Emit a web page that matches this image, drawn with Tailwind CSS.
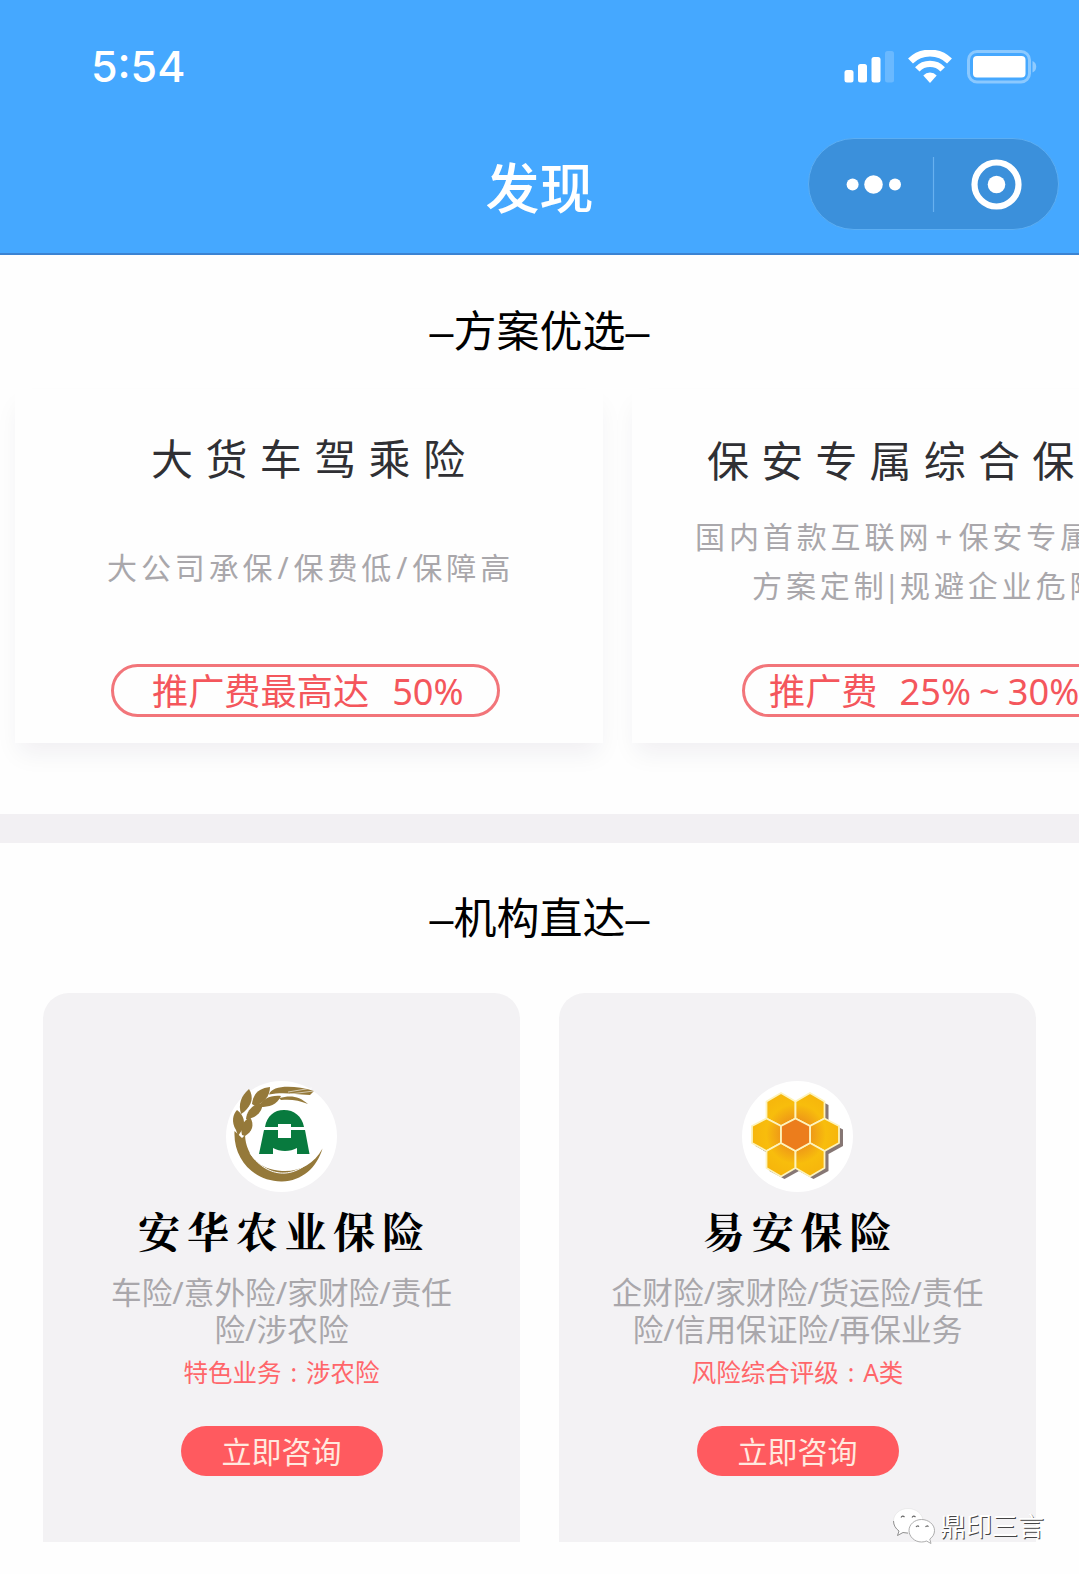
<!DOCTYPE html>
<html lang="zh-CN">
<head>
    <meta charset="UTF-8">
    <meta name="viewport" content="width=device-width, initial-scale=1.0">
    <title>发现</title>
    <script src="https://cdn.jsdelivr.net/npm/@tailwindcss/browser@4"></script>
</head>
<body class="bg-[#fefefe] font-['Noto_Sans','Noto_Sans_CJK_SC',sans-serif] overflow-hidden">
<div class="relative w-[1079px] h-[1574px] overflow-hidden">
    <header class="h-[255px] bg-[#45a8ff] border-b-2 border-[#3b83d2] text-white">
        <!-- status bar -->
        <div class="h-[133px] flex items-center justify-between pl-[91px] pr-[42px]">
            <div class="font-['Inter',sans-serif] font-medium text-[43px] leading-none">5:54</div>
            <div class="flex items-center">
                <svg class="w-[50px] h-[34px]" viewBox="0 0 50 34" fill="#fff">
                    <rect x="0.5" y="20" width="9" height="12.5" rx="2.5"/>
                    <rect x="14" y="14" width="9" height="18.5" rx="2.5"/>
                    <rect x="27.5" y="7" width="9" height="25.5" rx="2.5"/>
                    <rect x="41" y="1" width="9" height="31.5" rx="2.5" opacity=".2"/>
                </svg>
                <svg class="w-[44px] h-[34px] ml-[14px]" viewBox="0 0 44 34" fill="none" stroke="#fff" stroke-width="7">
                    <path d="M2.5 11a28 28 0 0 1 39 0"/>
                    <path d="M9.3 19.3a17.500 17.500 0 0 1 25.400 0" stroke-width="6.2"/>
                    <path d="M15.3 25.500a9 9 0 0 1 13.400 0L22 33z" fill="#fff" stroke="none"/>
                </svg>
                <svg class="w-[70px] h-[34px] ml-[15px]" viewBox="0 0 70 34" fill="#fff">
                    <rect x="1.5" y="1.5" width="61" height="30.5" rx="8.5" fill="none" stroke="#fff" stroke-opacity=".38" stroke-width="3"/>
                    <rect x="6" y="6" width="52.5" height="21.5" rx="4"/>
                    <path d="M65.5 11c5 2 5 9.500 0 11.500z" opacity=".4"/>
                </svg>
            </div>
        </div>
        <!-- nav bar -->
        <div class="relative h-[109px] flex items-center justify-center">
            <h1 class="text-[54px] font-medium leading-none">发现</h1>
            <div class="absolute left-[808px] top-[5px] w-[251px] h-[92px] rounded-full bg-[#3b90db] border border-[#5caef3] flex items-center">
                <svg class="w-[249px] h-[90px]" viewBox="0 0 249 90" fill="#fff">
                    <circle cx="43.6" cy="45.5" r="6"/>
                    <circle cx="64.5" cy="45.5" r="9.3"/>
                    <circle cx="86" cy="45.5" r="6"/>
                    <path d="M124.5 18v55" stroke="#68b1ef" stroke-width="1.2"/>
                    <circle cx="187.5" cy="45.5" r="22" fill="none" stroke="#fff" stroke-width="6.2"/>
                    <circle cx="187.5" cy="45.5" r="8.8"/>
                </svg>
            </div>
        </div>
    </header>

    <section class="h-[559px] pt-[53px]">
        <h2 class="h-[44px] flex justify-center text-[43px] leading-[46px] text-black"><span class="font-['Liberation_Sans']">–</span>方案优选<span class="font-['Liberation_Sans']">–</span></h2>
        <div class="mt-[37px] ml-[15px] flex gap-[29px]">
            <div class="w-[588px] h-[354px] shrink-0 bg-[#fefefe] shadow-[0_14px_24px_-4px_#20104010] flex flex-col pl-[93px]">
                <h3 class="mt-[48px] pl-[43px] text-[42px] leading-[44px] tracking-[12.4px] text-[#303034] whitespace-nowrap">大货车驾乘险</h3>
                <p class="mt-[62px] -ml-px h-[49px] text-[30px] leading-[49px] tracking-[3.9px] text-[#a9a7ab] whitespace-nowrap">大公司承保<span class="mx-px">/</span>保费低<span class="mx-px">/</span>保障高</p>
                <div class="mt-[72px] ml-[3px] w-[389px] h-[53px] rounded-full border-[3px] border-[#f2757a] pl-[38px] text-[36.2px] leading-[48px] text-[#f4565c] whitespace-nowrap">推广费最高达<span class="ml-[23px]">50%</span></div>
            </div>
            <div class="w-[588px] h-[354px] shrink-0 bg-[#fefefe] shadow-[0_14px_24px_-4px_#20104010] flex flex-col">
                <h3 class="mt-[50px] pl-[75px] text-[42px] leading-[44px] tracking-[12.2px] text-[#303034] whitespace-nowrap">保安专属综合保障</h3>
                <p class="mt-[29px] pl-[63px] text-[30px] leading-[49px] tracking-[3.9px] text-[#a9a7ab] whitespace-nowrap">国内首款互联网<span class="ml-[3px] mr-[2px]">+</span>保安专属</p>
                <p class="pl-[120px] text-[30px] leading-[49px] tracking-[3.9px] text-[#a9a7ab] whitespace-nowrap">方案定制<span class="-ml-[4px] -mr-[4px]">|</span>规避企业危险</p>
                <div class="mt-[54px] ml-[110px] w-[389px] h-[53px] rounded-full border-[3px] border-[#f2757a] pl-[24px] text-[36.2px] leading-[48px] text-[#f4565c] whitespace-nowrap">推广费<span class="ml-[22px]">25%</span><span class="mx-[8px]">~</span>30%</div>
            </div>
        </div>
    </section>

    <div class="h-[29px] bg-[#f2f0f3]"></div>

    <section class="pt-[53px]">
        <h2 class="h-[44px] flex justify-center text-[43px] leading-[44px] text-black"><span class="font-['Liberation_Sans']">–</span>机构直达<span class="font-['Liberation_Sans']">–</span></h2>
        <div class="mt-[53px] px-[43px] flex justify-between">
            <div class="w-[477px] h-[549px] rounded-t-[26px] bg-[#f3f2f4] flex flex-col items-center pt-[88px]">
                <svg class="w-[111px] h-[111px]" viewBox="0 0 111 111">
                    <circle cx="55.5" cy="55.5" r="55.5" fill="#fff"/>
                    <!-- wheat ring -->
                    <g fill="#95793a">
                        <path d="M8.5 50C7 80 30 101 56 100.500c20-.5 35-14 40.500-33C88 83 74 91 56 90 34 89 20 75 19 54l-3 3z"/>
                        <path d="M10 49C5 41 7 33 11 29c7 5 9 13 5 20l-4 6z"/>
                        <path d="M15 33c-3-10 0-18 8-25 5 8 3 16-5 23z"/>
                        <path d="M26 23C27 13 33 7 44 6c0 9-6 16-15 19z"/>
                        <path d="M16 54c-2-8 1-14 8-18 5 8 2 15-5 19z"/>
                        <path d="M20 38c1-9 7-15 17-16-1 10-8 15-15 16z"/>
                        <path d="M33 25c4-7 11-11 22-10-4 9-12 11-21 11z"/>
                        <path d="M43 13.500C46 4 68 4 88 10l-4 4c-6 0-10-1-15-1-9-1-18-1-26 .5z"/>
                        <path d="M53 17c12-3 20-2 29 6-9-4-18-5-27-4z"/>
                    </g>
                    <path d="M24 72c14 22 44 32 69-2" fill="none" stroke="#fff" stroke-width="1"/>
                    <path d="M62 11l24-4M64 13l24-3" fill="none" stroke="#fff" stroke-width=".6"/>
                    <!-- green mark -->
                    <path d="M39 46C41 35 48 29 58 29s18 6 20 17H65v-3H52v3z" fill="#087a3e"/>
                    <path d="M38 49h14v8h13v-8h14l4.500 24H71v-6c-7 4-17 4-24 0v6H33z" fill="#087a3e"/>
                </svg>
                <h3 class="mt-[15px] pl-[6px] h-[48px] font-['Noto_Serif_CJK_SC','Noto_Sans_CJK_SC',serif] font-bold text-[42px] leading-[47px] tracking-[6.8px] text-black">安华农业保险</h3>
                <p class="mt-[19px] w-[400px] text-center text-[30.7px] leading-[37px] text-[#a9a7ab]">车险/意外险/家财险/责任<br>险/涉农险</p>
                <p class="mt-[12px] h-[26px] text-[24.5px] leading-[26px] text-[#ff666a]">特色业务<span class="inline-block w-[24.5px] text-center">:</span>涉农险</p>
                <button class="mt-[40px] w-[202px] h-[50px] rounded-full bg-[#ff5a5f] text-[30px] leading-[51px] text-[#ffe9df]">立即咨询</button>
            </div>
            <div class="w-[477px] h-[549px] rounded-t-[26px] bg-[#f3f2f4] flex flex-col items-center pt-[88px]">
                <svg class="w-[111px] h-[111px]" viewBox="0 0 111 111">
                    <defs>
                        <radialGradient id="honey" gradientUnits="userSpaceOnUse" cx="54" cy="53" r="46">
                            <stop offset=".3" stop-color="#ee9618"/>
                            <stop offset=".65" stop-color="#f8bd0c"/>
                            <stop offset="1" stop-color="#f6b40c"/>
                        </radialGradient>
                    </defs>
                    <circle cx="55.5" cy="55.5" r="55.5" fill="#fff"/>
                    <path transform="translate(3.5 3)" d="M39 13l14.500 8L68 13l15 8v17l14.500 7.500v16.500L83 70v17l-15 8-14.500-8L39 95l-15-8V70L10 62V45.500L24 38V21z" fill="#5d4a45" opacity=".75"/>
                    <g fill="url(#honey)" stroke="#fdf3bd" stroke-width="1.8" stroke-linejoin="round">
                        <path d="M39 12l14.500 8.500v17L39 45l-14.500-7.500v-17z"/>
                        <path d="M68 12l14.500 8.500v17L68 45l-14.500-7.500v-17z"/>
                        <path d="M24.500 37.500L39 45v17l-14.500 8L10 62V45z"/>
                        <path d="M82.500 37.500L97 45v17l-14.500 8L68 62V45z"/>
                        <path d="M39 62l14.500 8v17L39 95.500 24.500 87V70z"/>
                        <path d="M68 62l14.500 8v17L68 95.500 53.500 87V70z"/>
                        <path d="M53.500 37.500L68 45v17l-14.500 8L39 62V45z" fill="#ec7d1c"/>
                    </g>
                </svg>
                <h3 class="mt-[15px] pl-[6px] h-[48px] font-['Noto_Serif_CJK_SC','Noto_Sans_CJK_SC',serif] font-bold text-[42px] leading-[47px] tracking-[6.8px] text-black">易安保险</h3>
                <p class="mt-[19px] w-[400px] text-center text-[30.7px] leading-[37px] text-[#a9a7ab]">企财险/家财险/货运险/责任<br>险/信用保证险/再保业务</p>
                <p class="mt-[12px] h-[26px] text-[24.5px] leading-[26px] text-[#ff666a]">风险综合评级<span class="inline-block w-[24.5px] text-center">:</span>A类</p>
                <button class="mt-[40px] w-[202px] h-[50px] rounded-full bg-[#ff5a5f] text-[30px] leading-[51px] text-[#ffe9df]">立即咨询</button>
            </div>
        </div>
    </section>

    <!-- watermark -->
    <div class="absolute left-[892px] top-[1507px] flex items-center">
        <svg class="w-[44px] h-[38px]" viewBox="0 0 44 38" fill="#fff" stroke-linejoin="round">
            <path d="M16 1.500C8 1.500 1.500 7 1.500 14c0 4 2 7.500 5.500 10l-1.500 4.500 5.500-3c9 3 20-2 20-11.500C31 7 24 1.500 16 1.500z" stroke="#ddd" stroke-width=".5"/>
            <path d="M1.500 14c0 4 2 7.500 5.500 10l-1.500 4.500 5.500-3 5 .6" fill="none" stroke="#888" stroke-width=".9"/>
            <path d="M29.500 12.500C22.500 12.500 17 17.500 17 23.500S22.500 35 29.500 35c2 0 3.500-.3 5-1l4.500 2.500-1.200-4.500c3-2 4.700-5 4.700-8.500 0-6-6-11-13-11z" stroke="#999" stroke-width=".8"/>
            <path d="M9 10.500q1.500-2.500 3.500-.5M20 10.500q1.500-2.500 3.500-.5M24 20q1.500-2 3-.3M33.500 20q1.500-2 3-.3" fill="none" stroke="#666" stroke-width="1.1"/>
        </svg>
        <span class="ml-[4px] text-[26px] leading-[38px] text-white [text-shadow:1px_1px_0_#444]">鼎印三言</span>
    </div>
</div>
</body>
</html>
